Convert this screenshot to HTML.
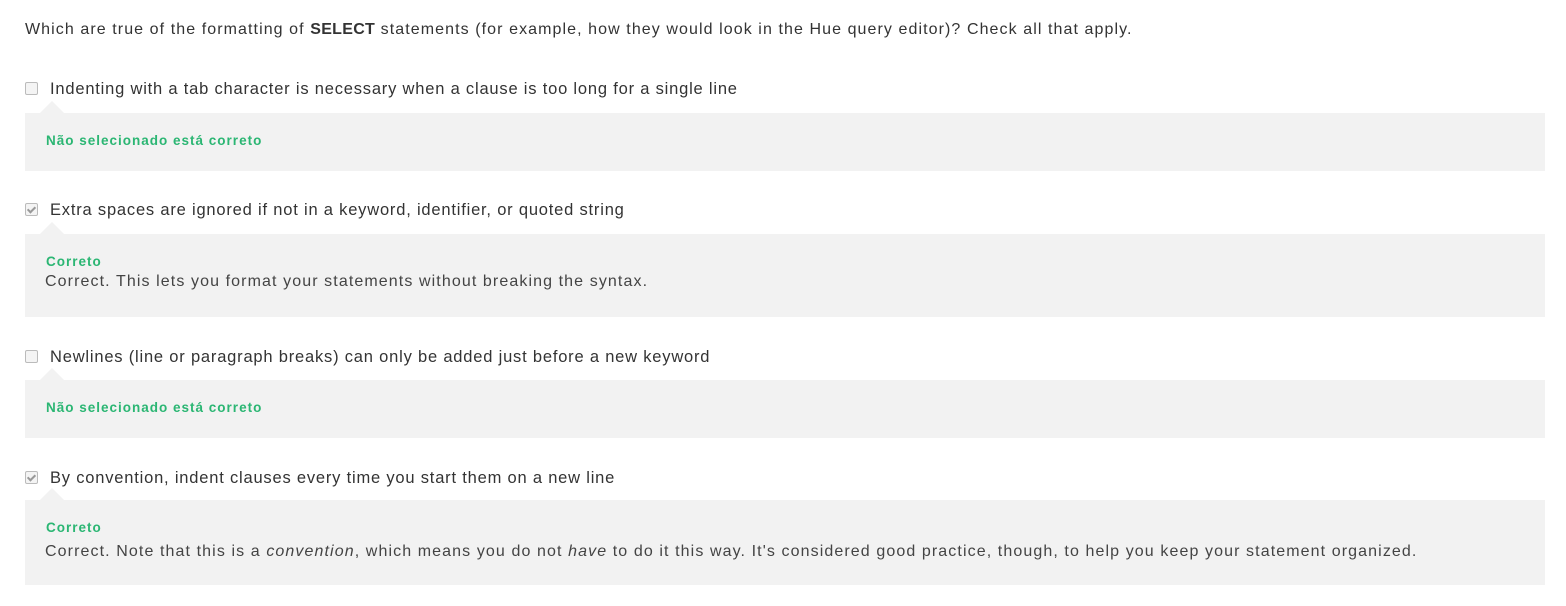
<!DOCTYPE html>
<html><head><style>
body{margin:0;width:1566px;height:606px;background:#fff;font-family:"Liberation Sans",sans-serif;color:#333;position:relative;overflow:hidden}
.q{position:absolute;left:25px;top:21px;font-size:16px;letter-spacing:1.08px;color:#333;white-space:nowrap}
.q b{letter-spacing:0.3px}
.opt{position:absolute;left:25px;font-size:16.5px;letter-spacing:0.8px;color:#333;white-space:nowrap}
.cb{display:inline-block;width:11px;height:11px;border:1px solid #bbb;border-radius:2px;background:#f4f4f4;vertical-align:-1px;margin-right:12px;position:relative}
.cb.on::after{content:"";position:absolute;left:3px;top:1px;width:3px;height:6px;border:solid #999;border-width:0 2px 2px 0;transform:rotate(45deg)}
.box{position:absolute;left:25px;width:1520px;background:#f2f2f2}
.box::before{content:"";position:absolute;left:15px;top:-12px;border:12px solid transparent;border-top:0;border-bottom:12px solid #f2f2f2}
.g{position:absolute;left:21px;font-size:13.5px;letter-spacing:1px;font-weight:bold;color:#2bb673}
.t{position:absolute;left:20px;font-size:16px;letter-spacing:1.1px;color:#444;white-space:nowrap}
</style></head><body>
<div class="q">Which are true of the formatting of <b>SELECT</b> statements (for example, how they would look in the Hue query editor)? Check all that apply.</div>

<div class="opt" style="top:80px"><span class="cb"></span>Indenting with a tab character is necessary when a clause is too long for a single line</div>
<div class="box" style="top:113px;height:58px"><div class="g" style="top:20px">Não selecionado está correto</div></div>

<div class="opt" style="top:201px"><span class="cb on"></span>Extra spaces are ignored if not in a keyword, identifier, or quoted string</div>
<div class="box" style="top:234px;height:83px"><div class="g" style="top:20px">Correto</div><div class="t" style="top:39px">Correct. This lets you format your statements without breaking the syntax.</div></div>

<div class="opt" style="top:348px"><span class="cb"></span>Newlines (line or paragraph breaks) can only be added just before a new keyword</div>
<div class="box" style="top:380px;height:58px"><div class="g" style="top:20px">Não selecionado está correto</div></div>

<div class="opt" style="top:469px"><span class="cb on"></span>By convention, indent clauses every time you start them on a new line</div>
<div class="box" style="top:500px;height:85px"><div class="g" style="top:20px">Correto</div><div class="t" style="top:43px">Correct. Note that this is a <i>convention</i>, which means you do not <i>have</i> to do it this way. It's considered good practice, though, to help you keep your statement organized.</div></div>
</body></html>
